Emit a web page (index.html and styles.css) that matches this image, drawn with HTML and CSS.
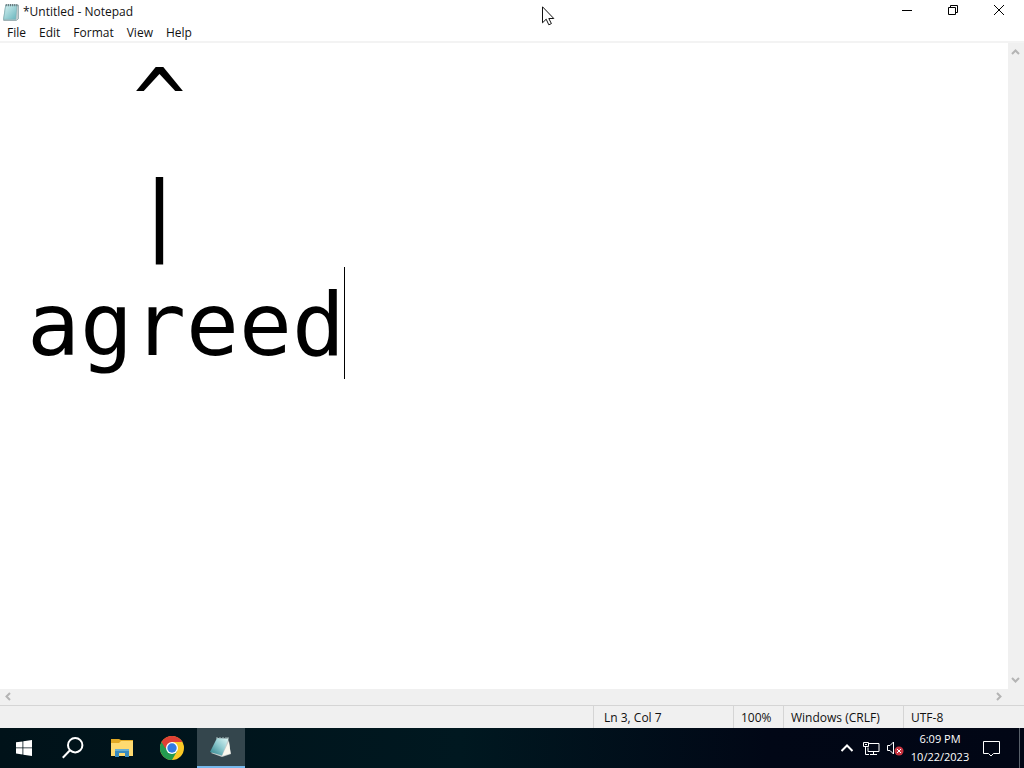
FILE: index.html
```html
<!DOCTYPE html>
<html lang="en">
<head>
<meta charset="utf-8">
<title>*Untitled - Notepad</title>
<link rel="stylesheet" href="styles.css">
</head>
<body>
<main class="window">
  <header class="titlebar">
    <svg class="app-icon" viewBox="0 0 16 18" aria-hidden="true">
      <defs><linearGradient id="pad" x2="1" y2="1"><stop stop-color="#d7f2f2"/><stop offset="1" stop-color="#68b5bd"/></linearGradient></defs>
      <path d="M3.500 2h12v13l-2 1.500H1.500V15z" fill="#c9ced0" stroke="#7f999d" stroke-width=".7"/>
      <path d="M3.500 2h10.500l-1 13.500H1.500z" fill="url(#pad)" stroke="#7bb1b6" stroke-width=".6"/>
      <path d="M4 1v2M6 1v2M8 1v2M10 1v2M12 1v2M14 1v2" stroke="#67777c"/>
    </svg>
    <h1 class="title">*Untitled - Notepad</h1>
    <div class="controls">
      <button class="control" aria-label="Minimize"><svg width="10" height="10" viewBox="0 0 10 10"><path d="M0 5.500h10"/></svg></button>
      <button class="control" aria-label="Restore"><svg width="10" height="10" viewBox="0 0 10 10"><path d="M.5 2.500h7v7h-7zM2.500 2.500v-2h7v7h-2"/></svg></button>
      <button class="control" aria-label="Close"><svg width="10" height="10" viewBox="0 0 10 10"><path d="M0 0l10 10M10 0L0 10"/></svg></button>
    </div>
  </header>
  <nav class="menu" aria-label="Menu">
    <button>File</button><button>Edit</button><button>Format</button><button>View</button><button>Help</button>
  </nav>
  <section class="workspace">
    <div class="document">
      <textarea class="editor" aria-label="Text editor" spellcheck="false">  ^
  |
agreed</textarea>
      <span class="caret"></span>
    </div>
    <div class="scroll vertical">
      <button aria-label="Scroll up"><svg width="9" height="9" viewBox="0 0 9 9"><path d="M1 6l3.500-3.500L8 6"/></svg></button>
      <button aria-label="Scroll down"><svg width="9" height="9" viewBox="0 0 9 9"><path d="M1 3l3.500 3.500L8 3"/></svg></button>
    </div>
    <div class="scroll horizontal">
      <button aria-label="Scroll left"><svg width="9" height="9" viewBox="0 0 9 9"><path d="M6 1L2.500 4.500 6 8"/></svg></button>
      <button aria-label="Scroll right"><svg width="9" height="9" viewBox="0 0 9 9"><path d="M3 1l3.500 3.500L3 8"/></svg></button>
    </div>
    <div class="corner"></div>
  </section>
  <footer class="status">
    <span class="position">Ln 3, Col 7</span>
    <span class="zoom">100%</span>
    <span class="endings">Windows (CRLF)</span>
    <span class="encoding">UTF-8</span>
  </footer>
</main>
<nav class="taskbar" aria-label="Taskbar">
  <button class="task start" aria-label="Start"><svg width="16" height="16" viewBox="0 0 16 16" fill="#fff"><path d="M0 2.300l6.500-.9v6.100H0zM7.300 1.300L16 0v7.500H7.300zM0 8.300h6.500v6.200L0 13.600zM7.300 8.300H16V16l-8.700-1.300z"/></svg></button>
  <button class="task search" aria-label="Search"><svg width="22" height="22" viewBox="0 0 22 22" fill="none" stroke="#fff" stroke-width="2"><circle cx="13.200" cy="8.200" r="7.200"/><path d="M8 13.300L.8 20.700"/></svg></button>
  <button class="task" aria-label="File Explorer"><svg width="22" height="18" viewBox="0 0 22 18">
    <path d="M0 0h8l2 1h12v16H0z" fill="#e2a925"/><path d="M0 4h8l2-2h12v15H0z" fill="#ffda70"/>
    <path d="M4 18v-7.500h14V18h-4v-4H8v4z" fill="#398bbf"/><path d="M4 10h14v2H4z" fill="#68aed2"/>
  </svg></button>
  <button class="task" aria-label="Google Chrome"><svg width="24" height="24" viewBox="0 0 24 24">
    <circle cx="12" cy="12" r="12" fill="#fbc926"/>
    <path d="M12 12L1.600 6A12 12 0 0 0 12 24l5.200-9z" fill="#249b50"/>
    <path d="M1.600 6A12 12 0 0 1 22.400 6H12v6H5.100z" fill="#df4035"/>
    <circle cx="12" cy="12" r="6" fill="#fff"/><circle cx="12" cy="12" r="4.700" fill="#327be3"/>
  </svg></button>
  <button class="task active" aria-label="Notepad"><svg width="24" height="24" viewBox="0 0 24 24">
    <defs><linearGradient id="note" x1="1" x2="0" y2="1"><stop stop-color="#e0f8f6"/><stop offset=".45" stop-color="#91cbd0"/><stop offset="1" stop-color="#287f88"/></linearGradient></defs>
    <path d="M19 3l3 16-9 3-11-4z" fill="#c6cdcc"/><path d="M20 6l1.500 12.500L13 21z" fill="#faf8ee"/>
    <path d="M8 3l11.500.5L13 20.500 1 17z" fill="url(#note)"/><path d="M8 2v2m3-2v2m3-2v2m3-2v2m2-2v2" stroke="#a4b8ba"/>
  </svg></button>
  <div class="tray">
    <button class="tray-button" aria-label="Show hidden icons"><svg class="chevron" width="12" height="8" viewBox="0 0 12 8"><path d="M.5 7L6 1.500 11.500 7"/></svg></button>
    <button class="tray-button" aria-label="Network"><svg width="17" height="15" viewBox="0 0 17 15"><path d="M6 2.500h10v8H5v-4M10.500 10.500v3M7 13.500h7M.5 1.500h5v4h-5zM2.500 5.500v8H6M2 3.500h2"/></svg></button>
    <button class="tray-button" aria-label="Volume muted"><svg width="17" height="15" viewBox="0 0 17 15"><path d="M.5 4.500H3L6.500 1v12L3 9.500H.5z"/><circle class="badge" cx="12" cy="10" r="4.500"/><path d="M10 8l4 4m0-4l-4 4"/></svg></button>
    <button class="clock"><time datetime="18:09">6:09 PM</time><time datetime="2023-10-22">10/22/2023</time></button>
    <button class="notifications" aria-label="Notifications"><svg width="17" height="17" viewBox="0 0 17 17"><path d="M.5 1.500h16v12h-6L8 16l-2.500-2.500h-5z"/></svg></button>
    <button class="desktop" aria-label="Show desktop"></button>
  </div>
</nav>
<svg class="pointer" width="13" height="20" viewBox="0 0 13 20" aria-hidden="true"><path d="M.5.800v16l3.700-3.600 2.600 5.600 2.600-1.200-2.600-5.100h5z" fill="#fff" stroke="#111"/></svg>
</body>
</html>
```
FILE: styles.css
```css
* { box-sizing: border-box; }
body {
  margin: 0;
  height: 100vh;
  display: flex;
  flex-direction: column;
  overflow: hidden;
  background: #fff;
  color: #111;
  font: 12px/16px "Open Sans", "Noto Sans", sans-serif;
}
button {
  margin: 0;
  padding: 0;
  border: 0;
  background: transparent;
  color: inherit;
  font: inherit;
}
svg { display: block; }
.window { flex: 1; min-height: 0; display: flex; flex-direction: column; }
.titlebar { display: flex; align-items: center; height: 24px; padding-left: 2px; }
.app-icon { width: 17px; height: 19px; margin-right: 4px; }
.title { margin: 0; font-size: 12px; font-weight: 400; line-height: 24px; }
.controls { display: flex; align-self: flex-start; height: 20px; margin: 0 2px 0 auto; }
.control { width: 46px; display: grid; place-items: center; }
.control svg { fill: none; stroke: #000; }
.menu { display: flex; gap: 13px; height: 19px; padding-left: 7px; border-bottom: 2px solid #f3f3f3; }
.workspace {
  flex: 1;
  min-height: 0;
  display: grid;
  grid-template-columns: 1fr 16px;
  grid-template-rows: 1fr 16px;
}
.document { position: relative; min-width: 0; }
.editor {
  display: block;
  width: 100%;
  height: 100%;
  margin: 0;
  padding: 2px 0 0 27px;
  border: 0;
  outline: 0;
  resize: none;
  overflow: hidden;
  background: #fff;
  color: #000;
  font: 88px/112px "DejaVu Sans Mono", monospace;
}
.caret { position: absolute; left: 344px; top: 224px; width: 1px; height: 112px; background: #000; }
.scroll { display: flex; align-items: center; justify-content: space-between; background: #f0f0f0; }
.scroll svg { fill: none; stroke: #b4b4b4; stroke-width: 2; }
.vertical { flex-direction: column; padding: 5px 1px 5px 0; }
.horizontal { padding: 0 5px 1px 4px; }
.corner { background: #f0f0f0; }
.status { display: flex; justify-content: flex-end; height: 23px; border-top: 1px solid #d5d5d5; background: #f0f0f0; line-height: 24px; }
.status span { padding-left: 7px; border-left: 1px solid #d5d5d5; white-space: nowrap; }
.status .position { width: 140px; padding-left: 10px; }
.zoom { width: 50px; }
.endings { width: 120px; }
.encoding { width: 121px; }
.taskbar { display: flex; height: 40px; background: linear-gradient(90deg, #001219, #001820 45%, #010716 75%, #010615); color: #fff; }
.task { width: 50px; display: grid; place-items: center; }
.task.start { width: 48px; }
.task.search { width: 49px; }
.task.active { width: 48px; background: #34464d; border-bottom: 2px solid #76b9ed; }
.tray { display: flex; align-items: stretch; margin-left: auto; }
.tray-button { width: 24px; display: grid; place-items: center; }
.tray svg { fill: none; stroke: #fff; }
.tray .chevron { stroke-width: 2; }
.tray .badge { fill: #c93440; stroke: none; }
.clock { width: 66px; display: flex; flex-direction: column; align-items: center; justify-content: center; font-size: 11px; line-height: 18px; }
.notifications { width: 36px; display: grid; place-items: center; }
.desktop { width: 5px; margin-left: 10px; border-left: 1px solid #59616b; }
.pointer { position: absolute; left: 542px; top: 6px; pointer-events: none; }
```
